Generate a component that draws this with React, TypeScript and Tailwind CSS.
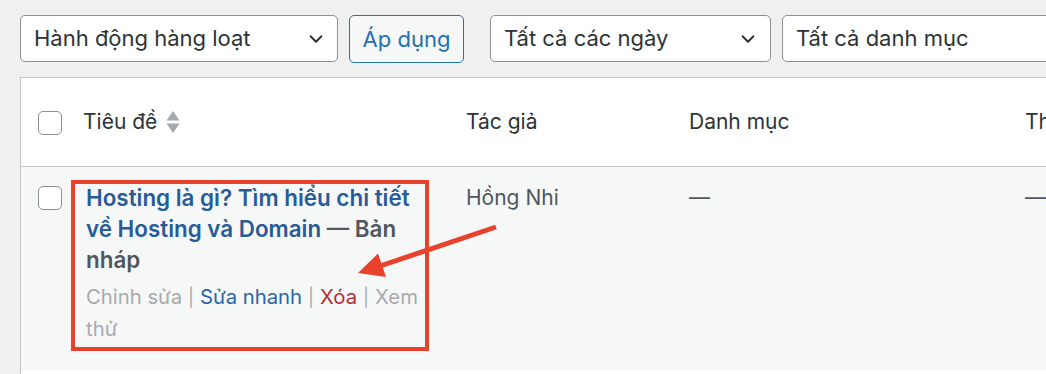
import React from "react";

function Chevron() {
  return (
    <svg width="18" height="18" viewBox="0 0 20 20" fill="none" className="shrink-0">
      <path d="M4 7l6 6 6-6" stroke="#2c3338" strokeWidth="2.2" strokeLinecap="round" strokeLinejoin="round" />
    </svg>
  );
}

function Checkbox({ className = "" }: { className?: string }) {
  return <div className={"w-[24px] h-[24px] rounded-[5px] border border-[#8c8f94] bg-white " + className} />;
}

function Sep() {
  return <span className="inline-block w-[18px] text-center text-[18px] text-[#a7aaad]">|</span>;
}

export default function App() {
  return (
    <div className="relative w-[1046px] h-[374px] overflow-hidden bg-[#f0f0f1] font-['Inter',sans-serif] text-[#2c3338]">
      {/* toolbar */}
      <div className="flex items-start pt-[15px] pl-[20px] h-[77px]">
        <div className="w-[318px] h-[47px] shrink-0 flex items-center justify-between pl-[13px] pr-[12px] bg-white border border-[#8c8f94] rounded-[5px] text-[22px]">
          <span>Hành động hàng loạt</span>
          <Chevron />
        </div>
        <div className="ml-[11px] w-[115px] h-[48px] shrink-0 flex items-center justify-center bg-[#f6f7f7] border border-[#2271b1] rounded-[5px] text-[22px] text-[#2271b1]">
          Áp dụng
        </div>
        <div className="ml-[26px] w-[281px] h-[47px] shrink-0 flex items-center justify-between pl-[13px] pr-[13px] bg-white border border-[#8c8f94] rounded-[5px] text-[22px]">
          <span>Tất cả các ngày</span>
          <Chevron />
        </div>
        <div className="ml-[11px] w-[320px] h-[47px] shrink-0 flex items-center pl-[13px] bg-white border border-[#8c8f94] rounded-[5px] text-[22px]">
          <span>Tất cả danh mục</span>
        </div>
      </div>

      {/* table */}
      <div className="ml-[20px] w-[1100px] border-l border-t border-[#c3c4c7] bg-white">
        <div className="grid grid-cols-[62px_383px_223px_336px_96px] h-[89px] items-center border-b border-[#c3c4c7] text-[21px] text-[#2c3338]">
          <div className="pl-[17px] pt-[2px]">
            <Checkbox />
          </div>
          <div className="flex items-center gap-[9px]">
            <span>Tiêu đề</span>
            <svg width="14" height="24" viewBox="0 0 14 24">
              <path d="M7 1 L13.5 10.5 H0.5 Z" fill="#a7aaad" />
              <path d="M7 23 L13.5 13.5 H0.5 Z" fill="#a7aaad" />
            </svg>
          </div>
          <div>Tác giả</div>
          <div>Danh mục</div>
          <div className="whitespace-nowrap">Thẻ</div>
        </div>

        <div className="grid grid-cols-[62px_383px_223px_336px_96px] h-[203px] items-start bg-[#f6f7f7] text-[21px] text-[#50575e]">
          <div className="pl-[17px] pt-[19px]">
            <Checkbox />
          </div>
          <div className="pl-[3px] pt-[15px]">
            <div className="w-[340px] text-[22.4px] leading-[31px] font-semibold">
              <span className="text-[#285c98]">Hosting là gì? Tìm hiểu chi tiết về Hosting và Domain</span>
              <span className="text-[#50575e]"> — Bản nháp</span>
            </div>
            <div className="w-[340px] pt-[6px] text-[20.3px] leading-[31px] text-[#a7aaad]">
              <span>Chỉnh sửa</span>
              <Sep />
              <span className="text-[#2a65a8]">Sửa nhanh</span>
              <Sep />
              <span className="text-[#b32d2e]">Xóa</span>
              <Sep />
              <span>Xem thử</span>
            </div>
          </div>
          <div className="pt-[15px] leading-[31px]">Hồng Nhi</div>
          <div className="pt-[15px] leading-[31px]">—</div>
          <div className="pt-[15px] leading-[31px]">—</div>
        </div>
        <div className="h-[60px] bg-white" />
      </div>

      {/* annotation */}
      <div className="absolute left-[71px] top-[180px] w-[358px] h-[171px] border-4 border-[#e8412c] pointer-events-none" />
      <svg className="absolute left-0 top-0 pointer-events-none" width="1046" height="374" viewBox="0 0 1046 374">
        <line x1="496" y1="227" x2="380" y2="266" stroke="#e8412c" strokeWidth="5" />
        <polygon points="358,273 378,253.5 386,277" fill="#e8412c" />
      </svg>
    </div>
  );
}
